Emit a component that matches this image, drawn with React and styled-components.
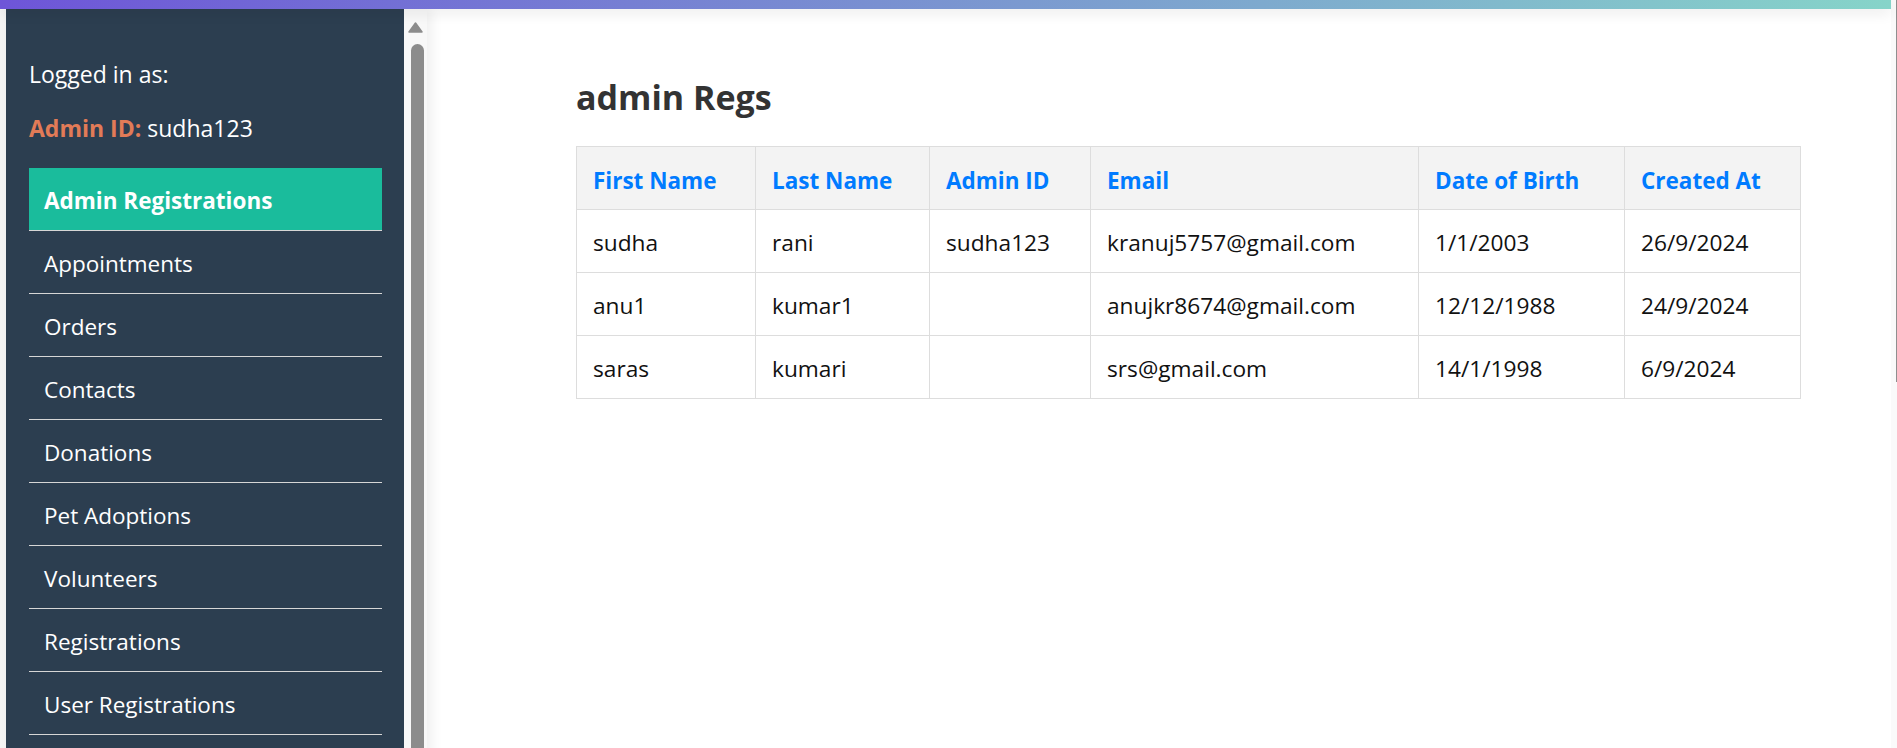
import React from "react";
import styled, { createGlobalStyle } from "styled-components";

const GlobalStyle = createGlobalStyle`
    html, body {
        margin: 0;
        padding: 0;
        height: 100%;
        overflow: hidden;
    }

    body {
        background: #f5f5f5;
        font-family: "Open Sans", "Noto Sans", sans-serif;
    }
`

const Shell = styled.div`
    display: flex;
    height: 100vh;
`

const Page = styled.div`
    flex: 1;
    display: flex;
    flex-direction: column;
    min-width: 0;
`

const TopBar = styled.div`
    height: 9px;
    flex-shrink: 0;
    background: linear-gradient(to right, #6e55d8, #86d4c9);
    box-shadow: 0 4px 14px rgba(0, 0, 0, 0.09);
    position: relative;
    z-index: 2;
`

const Body = styled.div`
    flex: 1;
    display: flex;
    padding-left: 6px;
    min-height: 0;
`

// sidebar panel + its own scroll rail, a bit taller than the window
const SidebarFrame = styled.div`
    width: 421px;
    flex-shrink: 0;
    height: calc(100vh + 20px);
    display: flex;
    position: relative;
    z-index: 1;
    box-shadow: 4px 0 12px rgba(0, 0, 0, 0.07);
`

const Sidebar = styled.aside`
    flex: 1;
    min-width: 0;
    padding: 23px 22px 0 23px;
    background: #2c3e50;
    color: #fff;
    overflow: hidden;
`

const ScrollRail = styled.div`
    width: 23px;
    flex-shrink: 0;
    background: #f8f8f8;
    display: flex;
    flex-direction: column;
    align-items: center;
    padding-top: 13px;
    box-sizing: border-box;

    svg {
        display: block;
        margin-left: -1px;
    }
`

const Thumb = styled.div`
    flex: 1;
    width: 13px;
    margin: 11px 0 0 3px;
    background: #8c8c8c;
    border-radius: 7px;
`

const UserInfo = styled.div`
    padding-top: 26px;
    margin-bottom: 24px;

    p {
        margin: 0;
        font-size: 23px;
        line-height: 32px;
    }

    p + p {
        margin-top: 22px;
    }

    strong {
        color: #e27b57;
        font-weight: 700;
    }
`

const NavList = styled.ul`
    list-style: none;
    margin: 0;
    padding: 0;
`

const NavItem = styled.li`
    height: 63px;
    box-sizing: border-box;
    display: flex;
    align-items: center;
    padding: 2px 15px 0;
    border-bottom: 1px solid #d6d6d6;
    font-size: 22.5px;
    font-weight: ${props => props.active ? 700 : 400};
    background: ${props => props.active ? "#1abc9c" : "transparent"};
    cursor: pointer;
`

const Main = styled.main`
    flex: 1;
    min-width: 0;
    background: #fff;
    padding: 64px 91px 0 149px;
`

const Title = styled.h2`
    margin: 0 0 25px;
    font-size: 34px;
    line-height: 48px;
    font-weight: 700;
    color: #333;
`

const Table = styled.table`
    width: 1224px;
    border-collapse: collapse;
    table-layout: fixed;

    th, td {
        padding: 0 16px;
        border: 1px solid #dddddd;
        text-align: left;
        white-space: nowrap;
    }

    th {
        height: 58px;
        padding-top: 4px;
        background: #f3f3f3;
        color: #007bff;
        font-size: 22.5px;
        font-weight: 700;
    }

    td {
        height: 60px;
        padding-top: 2px;
        color: #111;
        font-size: 22.7px;
    }
`

const PageScroll = styled.div`
    width: 6px;
    flex-shrink: 0;
    background: #fafafa;
    display: flex;
    justify-content: flex-end;
    align-items: flex-start;

    &::after {
        content: "";
        width: 1px;
        height: 382px;
        background: #8f8f8f;
    }
`

const menu = [
    "Admin Registrations",
    "Appointments",
    "Orders",
    "Contacts",
    "Donations",
    "Pet Adoptions",
    "Volunteers",
    "Registrations",
    "User Registrations"
];

const columns = [
    { label: "First Name", width: 179 },
    { label: "Last Name", width: 174 },
    { label: "Admin ID", width: 161 },
    { label: "Email", width: 328 },
    { label: "Date of Birth", width: 206 },
    { label: "Created At", width: 176 }
];

const regs = [
    ["sudha", "rani", "sudha123", "kranuj5757@gmail.com", "1/1/2003", "26/9/2024"],
    ["anu1", "kumar1", "", "anujkr8674@gmail.com", "12/12/1988", "24/9/2024"],
    ["saras", "kumari", "", "srs@gmail.com", "14/1/1998", "6/9/2024"]
];

export default function App() {
    return (
        <Shell>
            <GlobalStyle />
            <Page>
                <TopBar />
                <Body>
                    <SidebarFrame>
                        <Sidebar>
                            <UserInfo>
                                <p>Logged in as:</p>
                                <p><strong>Admin ID:</strong> sudha123</p>
                            </UserInfo>
                            <NavList>
                                {menu.map((item, i) => (
                                    <NavItem key={item} active={i === 0}>{item}</NavItem>
                                ))}
                            </NavList>
                        </Sidebar>
                        <ScrollRail>
                            <svg width="15" height="11" viewBox="0 0 15 11">
                                <path d="M7.5 1 L14 10 H1 Z" fill="#8c8c8c" stroke="#8c8c8c" strokeWidth="1.5" strokeLinejoin="round" />
                            </svg>
                            <Thumb />
                        </ScrollRail>
                    </SidebarFrame>
                    <Main>
                        <Title>admin Regs</Title>
                        <Table>
                            <colgroup>
                                {columns.map(col => <col key={col.label} style={{ width: col.width }} />)}
                            </colgroup>
                            <thead>
                                <tr>
                                    {columns.map(col => <th key={col.label}>{col.label}</th>)}
                                </tr>
                            </thead>
                            <tbody>
                                {regs.map((row, r) => (
                                    <tr key={r}>
                                        {row.map((cell, c) => <td key={c}>{cell}</td>)}
                                    </tr>
                                ))}
                            </tbody>
                        </Table>
                    </Main>
                </Body>
            </Page>
            <PageScroll />
        </Shell>
    )
}
